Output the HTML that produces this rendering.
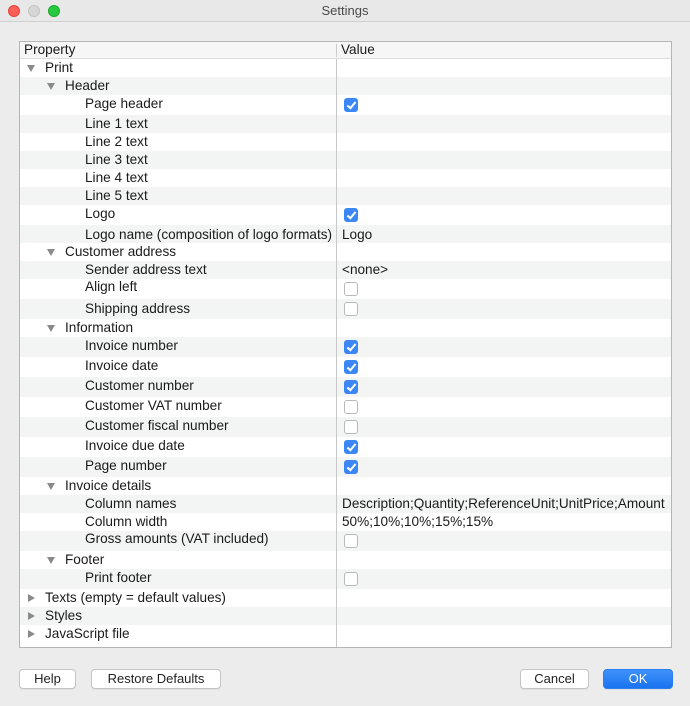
<!DOCTYPE html>
<html><head><style>
*{margin:0;padding:0;box-sizing:border-box}
body{width:690px;height:706px;background:#ececec;font-family:"Liberation Sans",sans-serif;font-size:13.6px;color:#1a1a1a;position:relative;overflow:hidden}
.title{position:absolute;left:0;top:0;width:690px;height:22px;background:#e8e8e8;border-bottom:1px solid #d0d0d0;text-align:center;line-height:21px;color:#4a4a4a;font-size:13px}
.dot{position:absolute;top:5px;width:12px;height:12px;border-radius:50%}
.tbl{position:absolute;left:19px;top:41px;width:653px;height:607px;border:1px solid #b5b5b5;background:#fff;overflow:hidden}
.hd{height:17px;background:#f6f6f6;border-bottom:1px solid #ddd;position:relative;line-height:16px}
.row{position:relative;height:18px;line-height:18px}
.row.c{height:20px;line-height:20px}
.g{background:#f3f4f4}
.l{position:absolute;white-space:nowrap}
.v{position:absolute;left:322px;white-space:nowrap}
.tri{position:absolute;width:0;height:0}
.dn{border-left:4px solid transparent;border-right:4px solid transparent;border-top:7px solid #8a8a8a;top:6px}
.rt{border-top:4px solid transparent;border-bottom:4px solid transparent;border-left:7px solid #8a8a8a;top:5px}
.cb{position:absolute;left:324px;top:3px;width:14px;height:14px;border-radius:3px;border:1px solid #b9b9b9;background:#fff}
.cb.on{background:#3b87f5;border-color:#3b87f5}
.cb.on:after{content:"";position:absolute;left:4px;top:1px;width:3px;height:7px;border:solid #fff;border-width:0 2px 2px 0;transform:rotate(40deg)}
.div{position:absolute;left:316px;top:0;width:1px;height:600px;background:#c8c8c8;z-index:5}
.btn{position:absolute;top:669px;height:20px;background:#fff;border:1px solid #c4c4c4;border-radius:4px;text-align:center;line-height:18px;font-size:13px;color:#222;box-shadow:0 1px 0 rgba(0,0,0,.05)}
</style></head><body>
<div class="title">Settings
<div class="dot" style="left:8px;background:#fc5f57;border:1px solid #e0443e"></div>
<div class="dot" style="left:28px;background:#d6d6d6;border:1px solid #c4c4c4"></div>
<div class="dot" style="left:48px;background:#28c840;border:1px solid #1aab29"></div>
</div>
<div class="tbl">
<div class="hd"><span class="l" style="left:4px">Property</span><span class="l" style="left:321px">Value</span><div style="position:absolute;left:316px;top:2px;width:1px;height:13px;background:#ccc"></div></div>
<div style="position:relative">
<div class="div"></div>
<div class="row"><span class="tri dn" style="left:7px"></span><span class="l" style="left:25px">Print</span></div>
<div class="row g"><span class="tri dn" style="left:27px"></span><span class="l" style="left:45px">Header</span></div>
<div class="row c"><span class="l" style="left:65px;top:-1px">Page header</span><span class="cb on"></span></div>
<div class="row g"><span class="l" style="left:65px">Line 1 text</span></div>
<div class="row"><span class="l" style="left:65px">Line 2 text</span></div>
<div class="row g"><span class="l" style="left:65px">Line 3 text</span></div>
<div class="row"><span class="l" style="left:65px">Line 4 text</span></div>
<div class="row g"><span class="l" style="left:65px">Line 5 text</span></div>
<div class="row c"><span class="l" style="left:65px;top:-1px">Logo</span><span class="cb on"></span></div>
<div class="row g"><span class="l" style="left:65px;top:1px">Logo name (composition of logo formats)</span><span class="v" style="top:1px">Logo</span></div>
<div class="row"><span class="tri dn" style="left:27px"></span><span class="l" style="left:45px">Customer address</span></div>
<div class="row g"><span class="l" style="left:65px">Sender address text</span><span class="v">&lt;none&gt;</span></div>
<div class="row c"><span class="l" style="left:65px;top:-2px">Align left</span><span class="cb"></span></div>
<div class="row c g"><span class="l" style="left:65px">Shipping address</span><span class="cb"></span></div>
<div class="row"><span class="tri dn" style="left:27px"></span><span class="l" style="left:45px">Information</span></div>
<div class="row c g"><span class="l" style="left:65px;top:-1px">Invoice number</span><span class="cb on"></span></div>
<div class="row c"><span class="l" style="left:65px;top:-1px">Invoice date</span><span class="cb on"></span></div>
<div class="row c g"><span class="l" style="left:65px;top:-1px">Customer number</span><span class="cb on"></span></div>
<div class="row c"><span class="l" style="left:65px;top:-1px">Customer VAT number</span><span class="cb"></span></div>
<div class="row c g"><span class="l" style="left:65px;top:-1px">Customer fiscal number</span><span class="cb"></span></div>
<div class="row c"><span class="l" style="left:65px;top:-1px">Invoice due date</span><span class="cb on"></span></div>
<div class="row c g"><span class="l" style="left:65px;top:-1px">Page number</span><span class="cb on"></span></div>
<div class="row"><span class="tri dn" style="left:27px"></span><span class="l" style="left:45px">Invoice details</span></div>
<div class="row g"><span class="l" style="left:65px">Column names</span><span class="v">Description;Quantity;ReferenceUnit;UnitPrice;Amount</span></div>
<div class="row"><span class="l" style="left:65px">Column width</span><span class="v">50%;10%;10%;15%;15%</span></div>
<div class="row c g"><span class="l" style="left:65px;top:-2px">Gross amounts (VAT included)</span><span class="cb"></span></div>
<div class="row"><span class="tri dn" style="left:27px"></span><span class="l" style="left:45px">Footer</span></div>
<div class="row c g"><span class="l" style="left:65px;top:-1px">Print footer</span><span class="cb"></span></div>
<div class="row"><span class="tri rt" style="left:8px"></span><span class="l" style="left:25px">Texts (empty = default values)</span></div>
<div class="row g"><span class="tri rt" style="left:8px"></span><span class="l" style="left:25px">Styles</span></div>
<div class="row"><span class="tri rt" style="left:8px"></span><span class="l" style="left:25px">JavaScript file</span></div>
</div>
</div>
<div class="btn" style="left:19px;width:57px">Help</div>
<div class="btn" style="left:91px;width:130px">Restore Defaults</div>
<div class="btn" style="left:520px;width:69px">Cancel</div>
<div class="btn" style="left:603px;width:70px;background:linear-gradient(#3f92fa,#1a73f0);border-color:#2a7ef2;color:#fff">OK</div>
</body></html>
